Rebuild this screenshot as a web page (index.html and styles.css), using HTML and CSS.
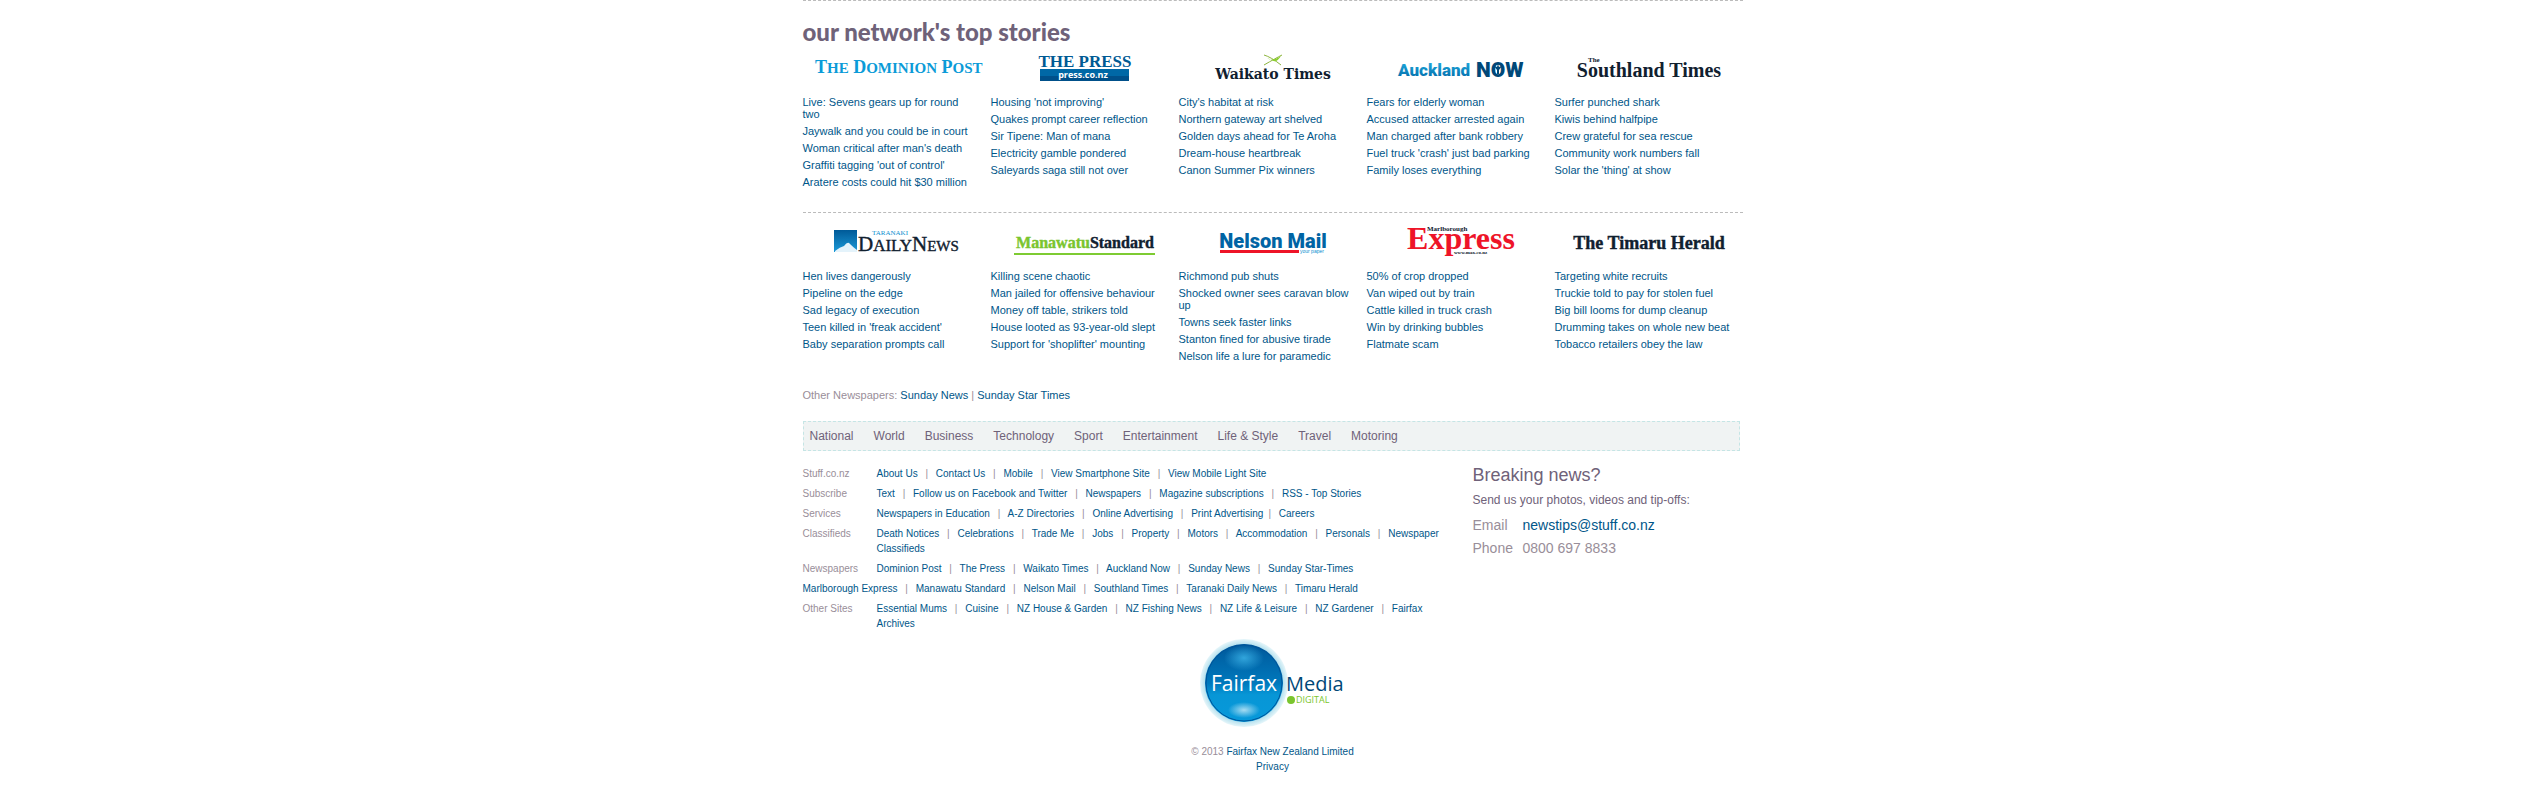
FILE: index.html
```html
<!DOCTYPE html>
<html lang="en">
<head>
<meta charset="utf-8">
<title>Stuff.co.nz</title>
<link rel="stylesheet" href="styles.css">
</head>
<body>
<div class="page">
  <section class="network">
    <h2>our network's top stories</h2>
    <div class="papers">
      <article class="paper">
        <a class="logo" href="#"><svg viewBox="0 0 188 44" role="img" aria-label="The Dominion Post">
          <text class="serif" x="12" y="27" font-size="18" fill="#0b9bd8">T<tspan font-size="15">HE</tspan> D<tspan font-size="15">OMINION</tspan> P<tspan font-size="15">OST</tspan></text>
        </svg></a>
        <ul>
          <li><a href="#">Live: Sevens gears up for round two</a></li>
          <li><a href="#">Jaywalk and you could be in court</a></li>
          <li><a href="#">Woman critical after man's death</a></li>
          <li><a href="#">Graffiti tagging 'out of control'</a></li>
          <li><a href="#">Aratere costs could hit $30 million</a></li>
        </ul>
      </article>
      <article class="paper">
        <a class="logo" href="#"><svg viewBox="0 0 188 44" role="img" aria-label="The Press">
          <text class="serif" x="94" y="21" font-size="17" text-anchor="middle" fill="#005a94">THE PRESS</text>
          <rect x="49" y="23" width="89" height="12" fill="#0068a6"/><rect x="49" y="30" width="89" height="5" fill="#00508a"/>
          <text class="humanist" x="92" y="32" font-size="9" text-anchor="middle" fill="#fff">press.co.nz</text>
        </svg></a>
        <ul>
          <li><a href="#">Housing 'not improving'</a></li>
          <li><a href="#">Quakes prompt career reflection</a></li>
          <li><a href="#">Sir Tipene: Man of mana</a></li>
          <li><a href="#">Electricity gamble pondered</a></li>
          <li><a href="#">Saleyards saga still not over</a></li>
        </ul>
      </article>
      <article class="paper">
        <a class="logo" href="#"><svg viewBox="0 0 188 44" role="img" aria-label="Waikato Times">
          <path d="M85 9q7 2 17 10M103 9q-6 3-18 10" fill="none" stroke="#8cb43c" stroke-width="1"/><path d="M88 12q5 4 14-2q-5 8-9 4z" fill="#8ccf30"/>
          <text class="slab" x="94" y="33" font-size="14" text-anchor="middle" fill="#10202f">Waikato Times</text>
        </svg></a>
        <ul>
          <li><a href="#">City's habitat at risk</a></li>
          <li><a href="#">Northern gateway art shelved</a></li>
          <li><a href="#">Golden days ahead for Te Aroha</a></li>
          <li><a href="#">Dream-house heartbreak</a></li>
          <li><a href="#">Canon Summer Pix winners</a></li>
        </ul>
      </article>
      <article class="paper">
        <a class="logo" href="#"><svg viewBox="0 0 188 44" role="img" aria-label="Auckland Now">
          <defs><linearGradient id="sky" x1="0" y1="0" x2="0" y2="1"><stop offset="0" stop-color="#22b0e2"/><stop offset="1" stop-color="#0067a6"/></linearGradient></defs>
          <text class="narrow" x="31" y="30" font-size="17" fill="url(#sky)">Auckland</text>
          <text class="narrow" x="109" y="31" font-size="21" fill="#004878">NOW</text>
          <path d="M130 28v-4l-3-4 3 1 1-3 1 3 3-1-3 4v4z" fill="#004878"/>
        </svg></a>
        <ul>
          <li><a href="#">Fears for elderly woman</a></li>
          <li><a href="#">Accused attacker arrested again</a></li>
          <li><a href="#">Man charged after bank robbery</a></li>
          <li><a href="#">Fuel truck 'crash' just bad parking</a></li>
          <li><a href="#">Family loses everything</a></li>
        </ul>
      </article>
      <article class="paper">
        <a class="logo" href="#"><svg viewBox="0 0 188 44" role="img" aria-label="The Southland Times">
          <text class="serif" x="33" y="16" font-size="7" fill="#10202f">The</text>
          <text class="serif" x="94" y="31" font-size="20" text-anchor="middle" fill="#10202f">Southland Times</text>
        </svg></a>
        <ul>
          <li><a href="#">Surfer punched shark</a></li>
          <li><a href="#">Kiwis behind halfpipe</a></li>
          <li><a href="#">Crew grateful for sea rescue</a></li>
          <li><a href="#">Community work numbers fall</a></li>
          <li><a href="#">Solar the 'thing' at show</a></li>
        </ul>
      </article>
    </div>
    <div class="papers">
      <article class="paper">
        <a class="logo" href="#"><svg viewBox="0 0 188 44" role="img" aria-label="Taranaki Daily News">
          <defs><linearGradient id="peak" x1="0" y1="0" x2="0" y2="1"><stop offset="0" stop-color="#005a98"/><stop offset="1" stop-color="#1c9ad8"/></linearGradient></defs>
          <rect x="31" y="10" width="23" height="22" fill="url(#peak)"/><path d="M32 31q5-4 9-5q3-4 5-3q5 5 8 7v2H32z" fill="#e4f3fb"/>
          <text class="serif-light" x="69" y="15" font-size="7" fill="#0b8fd0">TARANAKI</text>
          <text class="serif-light heavy" x="55" y="31" font-size="21" fill="#10202f">D<tspan font-size="17">AILY</tspan></text>
          <text class="serif-light heavy" x="109" y="31" font-size="21" fill="#10202f">N<tspan font-size="15">EWS</tspan></text>
        </svg></a>
        <ul>
          <li><a href="#">Hen lives dangerously</a></li>
          <li><a href="#">Pipeline on the edge</a></li>
          <li><a href="#">Sad legacy of execution</a></li>
          <li><a href="#">Teen killed in 'freak accident'</a></li>
          <li><a href="#">Baby separation prompts call</a></li>
        </ul>
      </article>
      <article class="paper">
        <a class="logo" href="#"><svg viewBox="0 0 188 44" role="img" aria-label="Manawatu Standard">
          <text class="serif heavy" x="94" y="28" font-size="16" text-anchor="middle" fill="#10202f"><tspan fill="#7ac52e" stroke="#7ac52e">Manawatu</tspan>Standard</text>
          <rect x="23" y="33" width="141" height="2" fill="#7ecb32"/>
        </svg></a>
        <ul>
          <li><a href="#">Killing scene chaotic</a></li>
          <li><a href="#">Man jailed for offensive behaviour</a></li>
          <li><a href="#">Money off table, strikers told</a></li>
          <li><a href="#">House looted as 93-year-old slept</a></li>
          <li><a href="#">Support for 'shoplifter' mounting</a></li>
        </ul>
      </article>
      <article class="paper">
        <a class="logo" href="#"><svg viewBox="0 0 188 44" role="img" aria-label="Nelson Mail">
          <text class="narrow" x="94" y="28" font-size="20" text-anchor="middle" fill="#0064a4">Nelson Mail</text>
          <rect x="41" y="30" width="79" height="3" fill="#ee1428"/>
          <text class="tiny" x="121" y="33" font-size="5" fill="#0b8fd0">your paper</text>
        </svg></a>
        <ul>
          <li><a href="#">Richmond pub shuts</a></li>
          <li><a href="#">Shocked owner sees caravan blow up</a></li>
          <li><a href="#">Towns seek faster links</a></li>
          <li><a href="#">Stanton fined for abusive tirade</a></li>
          <li><a href="#">Nelson life a lure for paramedic</a></li>
        </ul>
      </article>
      <article class="paper">
        <a class="logo" href="#"><svg viewBox="0 0 188 44" role="img" aria-label="Marlborough Express">
          <text class="serif" x="94" y="29" font-size="32" text-anchor="middle" fill="#ee1428">Express</text>
          <text class="serif" x="60" y="11" font-size="7" fill="#10202f">Marlborough</text>
          <text class="serif" x="87" y="34" font-size="5" fill="#10202f">www.max.co.nz</text>
        </svg></a>
        <ul>
          <li><a href="#">50% of crop dropped</a></li>
          <li><a href="#">Van wiped out by train</a></li>
          <li><a href="#">Cattle killed in truck crash</a></li>
          <li><a href="#">Win by drinking bubbles</a></li>
          <li><a href="#">Flatmate scam</a></li>
        </ul>
      </article>
      <article class="paper">
        <a class="logo" href="#"><svg viewBox="0 0 188 44" role="img" aria-label="The Timaru Herald">
          <text class="serif heavy" x="94" y="29" font-size="18" text-anchor="middle" fill="#10202f">The Timaru Herald</text>
        </svg></a>
        <ul>
          <li><a href="#">Targeting white recruits</a></li>
          <li><a href="#">Truckie told to pay for stolen fuel</a></li>
          <li><a href="#">Big bill looms for dump cleanup</a></li>
          <li><a href="#">Drumming takes on whole new beat</a></li>
          <li><a href="#">Tobacco retailers obey the law</a></li>
        </ul>
      </article>
    </div>
    <p class="others">Other Newspapers: <a href="#">Sunday News</a> | <a href="#">Sunday Star Times</a></p>
  </section>

  <nav class="sections">
    <a href="#">National</a><a href="#">World</a><a href="#">Business</a><a href="#">Technology</a><a href="#">Sport</a><a href="#">Entertainment</a><a href="#">Life &amp; Style</a><a href="#">Travel</a><a href="#">Motoring</a>
  </nav>

  <footer>
    <div class="columns">
      <dl class="directory">
        <div><dt>Stuff.co.nz</dt><dd><a href="#">About Us</a> <i>|</i> <a href="#">Contact Us</a> <i>|</i> <a href="#">Mobile</a> <i>|</i> <a href="#">View Smartphone Site</a> <i>|</i> <a href="#">View Mobile Light Site</a></dd></div>
        <div><dt>Subscribe</dt><dd><a href="#">Text</a> <i>|</i> <a href="#">Follow us on Facebook and Twitter</a> <i>|</i> <a href="#">Newspapers</a> <i>|</i> <a href="#">Magazine subscriptions</a> <i>|</i> <a href="#">RSS - Top Stories</a></dd></div>
        <div><dt>Services</dt><dd><a href="#">Newspapers in Education</a> <i>|</i> <a href="#">A-Z Directories</a> <i>|</i> <a href="#">Online Advertising</a> <i>|</i> <a href="#">Print Advertising</a><i>|</i> <a href="#">Careers</a></dd></div>
        <div><dt>Classifieds</dt><dd><a href="#">Death Notices</a> <i>|</i> <a href="#">Celebrations</a> <i>|</i> <a href="#">Trade Me</a> <i>|</i> <a href="#">Jobs</a> <i>|</i> <a href="#">Property</a> <i>|</i> <a href="#">Motors</a> <i>|</i> <a href="#">Accommodation</a> <i>|</i> <a href="#">Personals</a> <i>|</i> <a href="#">Newspaper Classifieds</a></dd></div>
        <div><dt>Newspapers</dt><dd><a href="#">Dominion Post</a> <i>|</i> <a href="#">The Press</a> <i>|</i> <a href="#">Waikato Times</a> <i>|</i> <a href="#">Auckland Now</a> <i>|</i> <a href="#">Sunday News</a> <i>|</i> <a href="#">Sunday Star-Times</a></dd>
          <dd class="full"><a href="#">Marlborough Express</a> <i>|</i> <a href="#">Manawatu Standard</a> <i>|</i> <a href="#">Nelson Mail</a> <i>|</i> <a href="#">Southland Times</a> <i>|</i> <a href="#">Taranaki Daily News</a> <i>|</i> <a href="#">Timaru Herald</a></dd></div>
        <div><dt>Other Sites</dt><dd><a href="#">Essential Mums</a> <i>|</i> <a href="#">Cuisine</a> <i>|</i> <a href="#">NZ House &amp; Garden</a> <i>|</i> <a href="#">NZ Fishing News</a> <i>|</i> <a href="#">NZ Life &amp; Leisure</a> <i>|</i> <a href="#">NZ Gardener</a> <i>|</i> <a href="#">Fairfax Archives</a></dd></div>
      </dl>
      <aside class="tips">
        <h3>Breaking news?</h3>
        <p>Send us your photos, videos and tip-offs:</p>
        <dl>
          <dt>Email</dt><dd><a href="#">newstips@stuff.co.nz</a></dd>
          <dt>Phone</dt><dd>0800 697 8833</dd>
        </dl>
      </aside>
    </div>
    <div class="owner">
      <a href="#"><svg class="fairfax" viewBox="0 0 146 94" role="img" aria-label="Fairfax Media Digital">
        <defs>
          <linearGradient id="ball" x1="0" y1="0" x2="0" y2="1"><stop offset="0" stop-color="#00589a"/><stop offset=".5" stop-color="#0078bc"/><stop offset=".65" stop-color="#0796d6"/><stop offset="1" stop-color="#0799da"/></linearGradient>
          <radialGradient id="halo"><stop offset=".88" stop-color="#b4e0ee"/><stop offset="1" stop-color="#e6f6fa"/></radialGradient>
          <radialGradient id="shine"><stop offset="0" stop-color="#31a5dc"/><stop offset="1" stop-color="#31a5dc" stop-opacity="0"/></radialGradient>
          <radialGradient id="glow"><stop offset="0" stop-color="#a6dcf2"/><stop offset="1" stop-color="#a6dcf2" stop-opacity="0"/></radialGradient>
        </defs>
        <circle cx="44" cy="47" r="44" fill="url(#halo)"/>
        <circle cx="44" cy="47" r="39" fill="url(#ball)"/>
        <circle cx="44" cy="47" r="38" fill="none" stroke="#00549a" stroke-width="1"/>
        <ellipse cx="44" cy="22" rx="20" ry="13" fill="url(#shine)"/>
        <ellipse cx="44" cy="74" rx="16" ry="8" fill="url(#glow)"/>
        <text class="fair" x="44" y="55" font-size="21" text-anchor="middle" fill="#fff">Fairfax</text>
        <text class="fair" x="86" y="55" font-size="20" fill="#004878">Media</text>
        <circle cx="91" cy="64" r="4" fill="#7ac52e"/>
        <text class="fair" x="96" y="67" font-size="9" fill="#7ac52e">DIGITAL</text>
      </svg></a>
      <p>© 2013 <a href="#">Fairfax New Zealand Limited</a></p>
      <p><a href="#">Privacy</a></p>
    </div>
  </footer>
</div>
</body>
</html>
```
FILE: styles.css
```css
* { box-sizing: border-box; margin: 0; padding: 0; }
body { background: #fff; color: #998e99; font: 11px/12px "Liberation Sans", Arial, sans-serif; }
a { color: #005689; text-decoration: none; }
ul { list-style: none; }
i { font-style: normal; margin: 0 5px; }

.page { max-width: 940px; margin: 0 auto; }

.network { border-top: 1px dashed #bbb; padding-top: 17px; }
.network h2 { color: #6f6279; font: 900 24px/28px Lato, sans-serif; }
.papers { display: grid; grid-template-columns: repeat(5, 1fr); padding-bottom: 19px; }
.papers + .papers { border-top: 1px dashed #bbb; padding: 7px 0 22px; }
.logo, .logo svg { display: block; width: 100%; }
.logo { margin-bottom: 6px; }
.paper ul { padding-right: 13px; }
.paper li { margin-bottom: 5px; }

.serif { font-family: "Liberation Serif", serif; font-weight: 700; }
.serif-light { font-family: "Liberation Serif", serif; }
.heavy { stroke: #10202f; stroke-width: .4px; }
.slab { font-family: "DejaVu Serif", serif; font-weight: 700; }
.humanist { font-family: "Open Sans", sans-serif; font-weight: 700; }
.narrow { font-family: "Liberation Sans Narrow", Roboto, sans-serif; font-weight: 900; }
.tiny { font-family: "Liberation Sans", sans-serif; }
.fair { font-family: "Open Sans", sans-serif; font-weight: 500; }

.sections { display: flex; gap: 20px; margin: 20px 3px 15px 0; padding: 6px; border: 1px dashed #c5e5e5; background: #f0f3f3; font-size: 12px; line-height: 16px; }
.sections a { color: #6f6279; }

.columns { display: grid; grid-template-columns: 640px 1fr; gap: 30px; }
.directory { font-size: 10px; line-height: 15px; }
.directory > div { display: grid; grid-template-columns: 74px 1fr; row-gap: 5px; margin-bottom: 5px; }
.full { grid-column: 1 / -1; }
.tips h3 { color: #6f6279; font-size: 18px; font-weight: 400; line-height: 18px; }
.tips p { margin: 8px 0; color: #6f6279; font-size: 12px; line-height: 16px; }
.tips dl { display: grid; grid-template-columns: 50px 1fr; row-gap: 5px; font-size: 14px; line-height: 18px; }

.owner { text-align: center; font-size: 10px; line-height: 15px; }
.fairfax { display: block; width: 146px; margin: 0 auto 14px; }
```
